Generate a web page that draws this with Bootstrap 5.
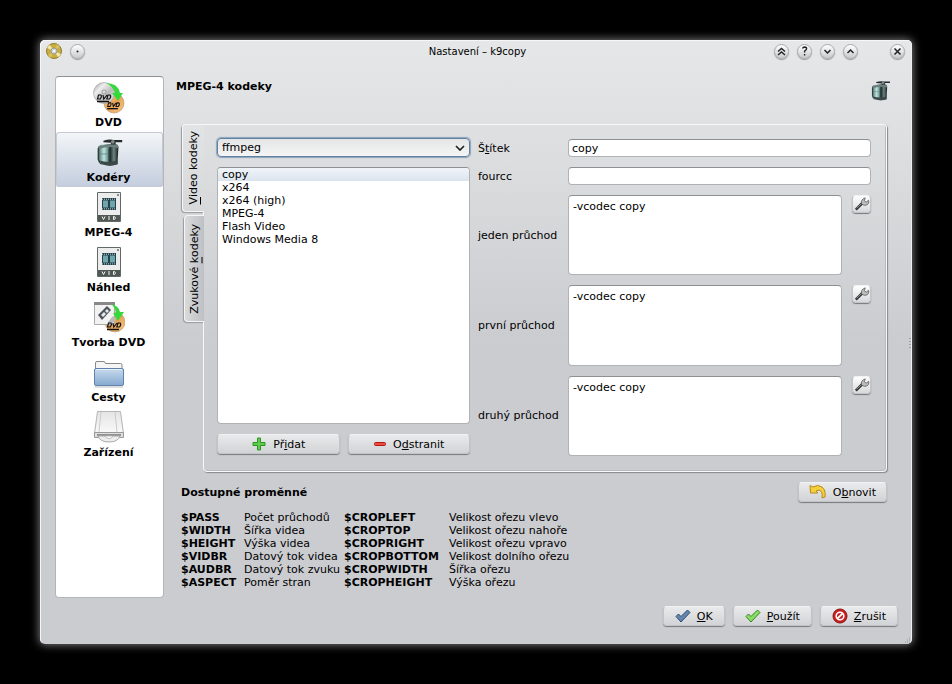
<!DOCTYPE html>
<html lang="cs">
<head>
<meta charset="utf-8">
<meta name="viewport" content="width=device-width, initial-scale=1">
<title>Nastavení – k9copy</title>
<link href="https://cdn.jsdelivr.net/npm/bootstrap@5.3.0/dist/css/bootstrap.min.css" rel="stylesheet">
<style>
body{background:#000;color:#000;font-family:"DejaVu Sans",sans-serif;font-size:11px;line-height:13px;padding:40px;min-height:100vh}
.win{min-height:calc(100vh - 80px);background:linear-gradient(#e6e7e8,#dcddde 120px,#cbccd0 300px);border-radius:5px;box-shadow:0 0 9px 1px #777,inset 1px 1px 0 #f6f6f6,inset -1px 0 0 #eee;padding:0 14px 18px 15px}
.titlebar{height:22px;margin:0 -7px 0 -9px}
.titlebar h1{font-size:10px;line-height:13px}
.round{width:15px;height:15px;padding:0;border:1px solid #a9abad;border-radius:50%;background:linear-gradient(#fff,#c9cacc);box-shadow:0 1px 1px #999;display:flex;align-items:center;justify-content:center}
.pages{width:109px;background:#fff;border:1px solid #b4b5b8;border-top-color:#8f9093;border-radius:4px;margin-top:14px}
.pages .nav-link{height:55px;padding:3px 2px 0 0;color:#000;font-weight:700;text-align:center;display:flex;flex-direction:column;align-items:center;border-radius:3px}
.pages .nav-link svg{width:32px;height:34px}
.pages .nav-link span{margin-top:2px}
.pages .nav-link.active{background:linear-gradient(#f4f6f9,#c3cddd);box-shadow:inset 0 0 0 1px #c5cbd4}
.page-body{min-width:0;padding:14px 11px 0 12px}
h2,h3{font-size:11px;line-height:13px;font-weight:700;margin:0}
.page-head{height:48px;padding-top:4px}
.page-head svg{margin-right:-5px}
.tabs-area{margin-left:7px}
.vtabs{width:21px;z-index:1;margin-right:-1px;gap:3px}
.vtab{writing-mode:vertical-rl;width:20px;align-self:flex-end;border:1px solid #f5f5f5;border-right:0;border-radius:4px 0 0 4px;padding:8px 2px;background:linear-gradient(90deg,#d9dadc,#bfc0c3);color:#000;line-height:15px;box-shadow:-1px 1px 1px #999a9d}
.vtab.active{width:22px;background:linear-gradient(#e2e3e4,#d7d8da);padding:6px 3px}
.vtab span{transform:rotate(180deg)}
.panel{border:1px solid #f8f8f8;border-radius:0 4px 4px 4px;box-shadow:1px 1px 1px #87888b,inset -1px -1px 0 #b9babd;padding:13px 15px 15px 13px;gap:8px}
.field,.field:focus{font-size:11px;line-height:13px;color:#000;background:#fff;border:1px solid #b1b2b5;border-top-color:#8e8f92;border-radius:4px;padding:1px 3px;min-height:0;box-shadow:none}
textarea.field,textarea.field:focus{resize:none;padding:4px;height:100%}
.chooser,.chooser:focus{font-size:11px;line-height:13px;color:#000;height:19px;padding:1px 24px 1px 4px;border:1px solid #62809f;border-radius:4px;box-shadow:0 0 1px 1px #8aa3bf;background:url("data:image/svg+xml,%3Csvg xmlns='http://www.w3.org/2000/svg' viewBox='0 0 10 6'%3E%3Cpath d='M1 1l4 4 4-4' fill='none' stroke='%23222' stroke-width='1.7'/%3E%3C/svg%3E") no-repeat right 4px center/10px 6px,linear-gradient(#e4e5e6,#f5f5f5)}
.codecs{background:#fff;border:1px solid #b1b2b5;border-top-color:#8e8f92;border-radius:4px}
.codecs .list-group-item{border:0;padding:0 4px;background:transparent;color:#000;font-size:11px;line-height:13px}
.codecs .list-group-item.active{background:linear-gradient(#f0f4f9,#dbe4ee)}
.left-col{flex:253 1 0;gap:10px;padding-bottom:2px}
.form-grid{flex:393 1 0;display:grid;grid-template-columns:80px 1fr 19px;grid-template-rows:18px 18px 1fr 1fr 1fr;gap:10px;padding-top:1px}
.form-grid label{align-self:center;white-space:nowrap}
.wide{grid-column:2 / 4}
.face{height:20px;padding:0 10px;border:1px solid #c3c4c7;border-top-color:#f2f2f2;border-radius:4px;background:linear-gradient(#e9eaeb,#d2d3d6);box-shadow:0 1px 1px #77787b;color:#000;font-size:11px;line-height:13px;display:flex;align-items:center;justify-content:center;gap:6px;white-space:nowrap}
.tool{width:19px;height:18px;padding:0;background:linear-gradient(#fff,#d7d8da)}
.btn:hover{color:#000}
.page-foot{padding-top:10px}
.page-foot h3{margin-top:4px}
.vars-box{padding:0 0 9px 5px}
.vars{margin-top:12px}
.vars th,.vars td{padding:0;line-height:13px;white-space:nowrap}
.vars .k1{width:63px}
.vars .k2{width:105px}
.vars .v1{width:100px}
.actions{gap:8px;padding-top:8px}
.actions .face{padding:0 11px}
.grip{position:absolute;right:1px;bottom:1px}
.edge{position:absolute;right:0;top:298px}
</style>
</head>
<body>
<svg class="position-absolute" width="0" height="0" aria-hidden="true" xmlns="http://www.w3.org/2000/svg">
<defs>
<linearGradient id="gm"><stop offset="0" stop-color="#374744"/><stop offset=".15" stop-color="#7fa8a5"/><stop offset=".3" stop-color="#c4e2df"/><stop offset=".5" stop-color="#63908d"/><stop offset=".6" stop-color="#1d2d2b"/><stop offset=".78" stop-color="#6d8481"/><stop offset="1" stop-color="#131a19"/></linearGradient>
<linearGradient id="gs" x2="1" y2="1"><stop offset="0" stop-color="#999"/><stop offset=".3" stop-color="#eee"/><stop offset=".6" stop-color="#bbb"/><stop offset="1" stop-color="#eee"/></linearGradient>
<linearGradient id="go" x2="1" y2="1"><stop offset="0" stop-color="#f5d7a8"/><stop offset=".5" stop-color="#e9a254"/><stop offset="1" stop-color="#f4c98e"/></linearGradient>
<linearGradient id="gf" x2="0" y2="1"><stop offset="0" stop-color="#c8dbee"/><stop offset="1" stop-color="#86a9d0"/></linearGradient>
<linearGradient id="gd" x2="0" y2="1"><stop offset="0" stop-color="#e4e4e4"/><stop offset="1" stop-color="#fafafa"/></linearGradient>
</defs>
<symbol id="mixer" viewBox="0 0 32 32"><path d="M3 11Q3 8 8 7l11-1q5 0 6 3l-1 19q-9 3-18 0-3-2-3-6z" fill="url(#gm)"/><path d="M4 9Q13 5 24 7l1 4q-11-3-21 1z" fill="#6c7f7d"/><path d="M3.500 11v12l3 5M15 11v17" fill="none" stroke="#27322f"/><path d="M5 17h9" stroke="#5b8784" stroke-width=".8"/><path d="M5 24q9 3 19 0v4q-8 3-17 0z" fill="#3a4947"/><path d="M9 3q6-2 11-1h9v2.500h-7V7h-5V5l-8-.5z" fill="#252b2a"/><circle cx="19" cy="4" r="2" fill="#7d8987"/></symbol>
<symbol id="wordd" viewBox="0 0 16 9"><path d="M2.500 1H5q1 1.500-.8 4H1.500zM7 1l.8 4L11 1M12 1h2q1.500 1.500-.5 4h-2.700z" fill="none" stroke="#111" stroke-width="1.200"/><path d="M1 7.500h12" stroke="#111" stroke-width="1.500"/></symbol>
<symbol id="dvd" viewBox="0 0 32 34"><circle cx="21" cy="23" r="10" fill="url(#go)" stroke="#b48a58" stroke-width=".6"/><circle cx="11" cy="13" r="10.500" fill="url(#gs)" stroke="#999" stroke-width=".6"/><circle cx="11" cy="12" r="2" fill="#ddd" stroke="#777" stroke-width=".6"/><path d="M13 3q12 0 14 10h3l-5 8-6-8h3q-2-7-9-10z" fill="#36d93b"/><use href="#wordd" x="3" y="14" width="16" height="9"/><use href="#wordd" x="13" y="22" width="15" height="8"/></symbol>
<symbol id="vid" viewBox="0 0 32 34"><path d="M4.500 2.500h23v29h-23z" fill="#ececec" stroke="#626a67"/><path d="M5 25h22v6H5z" fill="#505854"/><path d="M24 5h2M25 4v2" stroke="#555" stroke-width=".8"/><path d="M9 8h14v12H9z" fill="#234148"/><path d="M10 10.500h5v7h-5zm7 0h5v7h-5z" fill="#70a5ad"/><path d="M9 9.200h14M9 18.900h14" stroke="#c4dadd" stroke-dasharray="1 1"/><path d="M9 26.500l1.500 3 1.500-3M16 26v4M20.500 26.500v3h1q2-1.500 0-3z" fill="none" stroke="#f2f2f2"/></symbol>
<symbol id="wrench" viewBox="0 0 18 16"><path d="M3 14l7-7" stroke="#333" stroke-width="2.800"/><path d="M4 12.500l6-6" stroke="#aaa" stroke-width=".8"/><path d="M9 8q-1-5 4-6.500l-1 3 2 1.500 2.500-2q1 4-2.500 5.200-2 .5-3-.2z" fill="#bbb" stroke="#555" stroke-width=".8"/></symbol>
</svg>

<main class="win position-relative d-flex flex-column">
  <header class="titlebar position-relative d-flex align-items-center gap-2">
    <svg width="16" height="16" viewBox="0 0 16 16" aria-hidden="true"><circle cx="8" cy="8" r="7.500" fill="#c9ad3d" stroke="#8e7c35"/><path d="M8 8L1 5a7 7 0 013-3zM8 8l7 3a7 7 0 01-3 3z" fill="#f3e9a8"/><path d="M8 8l3-7 3 3zM8 8l-3 7-3-3z" fill="#d8c25c"/><circle cx="8" cy="8" r="3" fill="#d5d5d5" stroke="#999"/><circle cx="8" cy="8" r="1" fill="#fff"/></svg>
    <button type="button" class="round" aria-label="Na všech plochách"><svg width="3" height="3"><circle cx="1.500" cy="1.500" r="1" fill="#222"/></svg></button>
    <h1 class="flex-fill text-center m-0 fw-normal ps-5 ms-5">Nastavení – k9copy</h1>
    <button type="button" class="round" aria-label="Držet nad ostatními"><svg width="9" height="9" viewBox="0 0 9 9" fill="none" stroke="#222" stroke-width="1.400"><path d="M1 4.500l3.500-3 3.500 3M1 8l3.500-3L8 8"/></svg></button>
    <button type="button" class="round" aria-label="Nápověda"><svg width="9" height="10" viewBox="0 0 9 10" fill="none" stroke="#222" stroke-width="1.400"><path d="M2.500 2.500Q3 1 4.700 1q2 .2 1.900 1.800Q6.500 4 4.600 5v1.500M4.600 8v1.500"/></svg></button>
    <button type="button" class="round" aria-label="Minimalizovat"><svg width="9" height="9" viewBox="0 0 9 9" fill="none" stroke="#222" stroke-width="1.500"><path d="M1.500 3l3 3 3-3"/></svg></button>
    <button type="button" class="round me-4" aria-label="Maximalizovat"><svg width="9" height="9" viewBox="0 0 9 9" fill="none" stroke="#222" stroke-width="1.500"><path d="M1.500 6l3-3 3 3"/></svg></button>
    <button type="button" class="round" aria-label="Zavřít"><svg width="9" height="9" viewBox="0 0 9 9" fill="none" stroke="#222" stroke-width="1.500"><path d="M1.500 1.500l6 6M7.500 1.500l-6 6"/></svg></button>
  </header>

  <div class="d-flex flex-fill">
    <nav class="pages nav flex-column flex-nowrap flex-shrink-0" aria-label="Stránky nastavení">
      <a class="nav-link" href="#"><svg><use href="#dvd"/></svg><span>DVD</span></a>
      <a class="nav-link active" href="#" aria-current="page"><svg viewBox="0 0 32 34"><use href="#mixer" x="2" y="3" width="30" height="30"/></svg><span>Kodéry</span></a>
      <a class="nav-link" href="#"><svg><use href="#vid"/></svg><span>MPEG-4</span></a>
      <a class="nav-link" href="#"><svg><use href="#vid"/></svg><span>Náhled</span></a>
      <a class="nav-link" href="#"><svg viewBox="0 0 32 34"><circle cx="22" cy="22" r="10" fill="url(#go)" stroke="#b48a58" stroke-width=".6"/><path d="M1.500 3.500h20v21h-20z" fill="#f2f2f2" stroke="#aaa"/><path d="M1 2h21v3H1z" fill="#888"/><path d="M5 15l9-9 4 4-9 10z" fill="#4d5359"/><path d="M8 15l3-3 2 2-3 3zM12 11l2-2 2 2-2 2z" fill="#e5eaee"/><path d="M15 22l5-6 3 4-5 5z" fill="#bbb"/><path d="M18 4q8 2 9 8h4l-6 9-5-8h3q-1-6-5-9z" fill="#36d93b"/><use href="#wordd" x="13" y="22" width="16" height="9"/></svg><span>Tvorba DVD</span></a>
      <a class="nav-link" href="#"><svg viewBox="0 0 32 34"><path d="M2.500 15V8q0-1.500 1.500-1.500h7q1 0 1.500 2h15q1.500 0 1.500 1.500v5" fill="#f5f5f5" stroke="#888"/><rect x="1.500" y="13.500" width="29" height="17" rx="1.500" fill="url(#gf)" stroke="#5f83ab"/><path d="M3 14.500h26" stroke="#e6f0fa"/><path d="M2 32h28" stroke="#bbb"/></svg><span>Cesty</span></a>
      <a class="nav-link" href="#"><svg viewBox="0 0 32 34"><path d="M4.500 1.500h23l3 22h-29z" fill="url(#gd)" stroke="#b5b5b5"/><path d="M8 2L6 22M22 2l2 20" stroke="#ccc"/><path d="M1.500 22.500h29v5h-29z" fill="#dedede" stroke="#999"/><path d="M4 25h24" stroke="#777" stroke-width="1.500"/><path d="M5 26h22q-2 6-11 6T5 26z" fill="#ededed" stroke="#aaa"/><path d="M12 26h8q-1 2.500-4 2.500T12 26z" fill="#fff" stroke="#aaa" stroke-width=".7"/></svg><span>Zařízení</span></a>
    </nav>

    <section class="page-body flex-fill d-flex flex-column">
      <div class="page-head d-flex justify-content-between">
        <h2>MPEG-4 kodeky</h2>
        <svg width="22" height="22" aria-hidden="true"><use href="#mixer"/></svg>
      </div>
      <div class="tabs-area d-flex flex-fill">
        <div class="vtabs d-flex flex-column" role="tablist" aria-label="Kodeky">
          <button type="button" class="vtab active" role="tab" aria-selected="true"><span class="d-inline-block"><u>V</u>ideo kodeky</span></button>
          <button type="button" class="vtab" role="tab" aria-selected="false"><span class="d-inline-block">Zvukové <u>k</u>odeky</span></button>
        </div>
        <div class="panel d-flex flex-fill" role="tabpanel">
          <div class="left-col d-flex flex-column">
            <select class="chooser form-select" aria-label="Kodér"><option>ffmpeg</option><option>mencoder</option></select>
            <div class="codecs list-group flex-fill">
              <button type="button" class="list-group-item list-group-item-action active">copy</button>
              <button type="button" class="list-group-item list-group-item-action">x264</button>
              <button type="button" class="list-group-item list-group-item-action">x264 (high)</button>
              <button type="button" class="list-group-item list-group-item-action">MPEG-4</button>
              <button type="button" class="list-group-item list-group-item-action">Flash Video</button>
              <button type="button" class="list-group-item list-group-item-action">Windows Media 8</button>
            </div>
            <div class="d-flex gap-2">
              <button type="button" class="btn face col"><svg width="16" height="14" viewBox="0 0 16 14"><path d="M6.500 1h3v4.500H14v3H9.500V13h-3V8.500H2v-3h4.500z" fill="#5fce4c" stroke="#2c9420" stroke-linejoin="round"/></svg><span>Př<u>i</u>dat</span></button>
              <button type="button" class="btn face col"><svg width="14" height="14" viewBox="0 0 14 14"><rect x="1.500" y="5.500" width="11" height="3" rx="1" fill="#ee4b43" stroke="#b11b17"/></svg><span>O<u>d</u>stranit</span></button>
            </div>
          </div>
          <form class="form-grid">
            <label for="lbl"><span>Š<u>t</u>ítek</span></label><input id="lbl" class="form-control field wide" value="copy">
            <label for="fcc">fourcc</label><input id="fcc" class="form-control field wide">
            <label for="p1">jeden průchod</label><textarea id="p1" class="form-control field">-vcodec copy</textarea>
            <button type="button" class="btn face tool" aria-label="Upravit jeden průchod"><svg width="18" height="16"><use href="#wrench"/></svg></button>
            <label for="p2">první průchod</label><textarea id="p2" class="form-control field">-vcodec copy</textarea>
            <button type="button" class="btn face tool" aria-label="Upravit první průchod"><svg width="18" height="16"><use href="#wrench"/></svg></button>
            <label for="p3">druhý průchod</label><textarea id="p3" class="form-control field">-vcodec copy</textarea>
            <button type="button" class="btn face tool" aria-label="Upravit druhý průchod"><svg width="18" height="16"><use href="#wrench"/></svg></button>
          </form>
        </div>
      </div>
      <div class="page-foot d-flex justify-content-between align-items-start">
        <div class="vars-box">
          <h3>Dostupné proměnné</h3>
          <table class="vars">
            <tr><th class="k1">$PASS</th><td class="v1">Počet průchodů</td><th class="k2">$CROPLEFT</th><td>Velikost ořezu vlevo</td></tr>
            <tr><th>$WIDTH</th><td>Šířka videa</td><th>$CROPTOP</th><td>Velikost ořezu nahoře</td></tr>
            <tr><th>$HEIGHT</th><td>Výška videa</td><th>$CROPRIGHT</th><td>Velikost ořezu vpravo</td></tr>
            <tr><th>$VIDBR</th><td>Datový tok videa</td><th>$CROPBOTTOM</th><td>Velikost dolního ořezu</td></tr>
            <tr><th>$AUDBR</th><td>Datový tok zvuku</td><th>$CROPWIDTH</th><td>Šířka ořezu</td></tr>
            <tr><th>$ASPECT</th><td>Poměr stran</td><th>$CROPHEIGHT</th><td>Výška ořezu</td></tr>
          </table>
        </div>
        <button type="button" class="btn face"><svg width="18" height="16" viewBox="0 0 18 16"><path d="M1 1.500l3 1.500q5-3 9 0 4 3 3 10l-3 1q1-6-2-7.500-2-1-4 .5L9 9 1.500 9z" fill="#f4cf3c" stroke="#b98a1d" stroke-linejoin="round"/></svg><span>O<u>b</u>novit</span></button>
      </div>
    </section>
  </div>

  <footer class="actions d-flex justify-content-end">
    <button type="button" class="btn face"><svg width="16" height="14" viewBox="0 0 16 14"><path d="M1 7.500L3.500 5 6 7.500 12.500 1 15 3.500 6 13z" fill="#6485ad" stroke="#2f4c70" stroke-linejoin="round"/></svg><span><u>O</u>K</span></button>
    <button type="button" class="btn face"><svg width="16" height="14" viewBox="0 0 16 14"><path d="M1 7.500L3.500 5 6 7.500 12.500 1 15 3.500 6 13z" fill="#8bdc63" stroke="#34862a" stroke-linejoin="round"/></svg><span><u>P</u>oužít</span></button>
    <button type="button" class="btn face"><svg width="16" height="16" viewBox="0 0 16 16"><circle cx="8" cy="8" r="7" fill="#c92020" stroke="#8b0f10"/><circle cx="8" cy="8" r="3.800" fill="none" stroke="#fff" stroke-width="1.600"/><path d="M5.300 10.700l5.400-5.400" stroke="#fff" stroke-width="1.800"/></svg><span><u>Z</u>rušit</span></button>
  </footer>
  <svg class="edge" width="3" height="10" aria-hidden="true"><path d="M1 0v10" stroke="#777" stroke-dasharray="1 2"/></svg>
  <svg class="grip" width="7" height="7" aria-hidden="true"><path d="M1 6h6M3 4h4M5 2h2" stroke="#999" stroke-dasharray="1 1"/></svg>
</main>
<script src="https://cdn.jsdelivr.net/npm/bootstrap@5.3.0/dist/js/bootstrap.bundle.min.js"></script>
</body>
</html>
